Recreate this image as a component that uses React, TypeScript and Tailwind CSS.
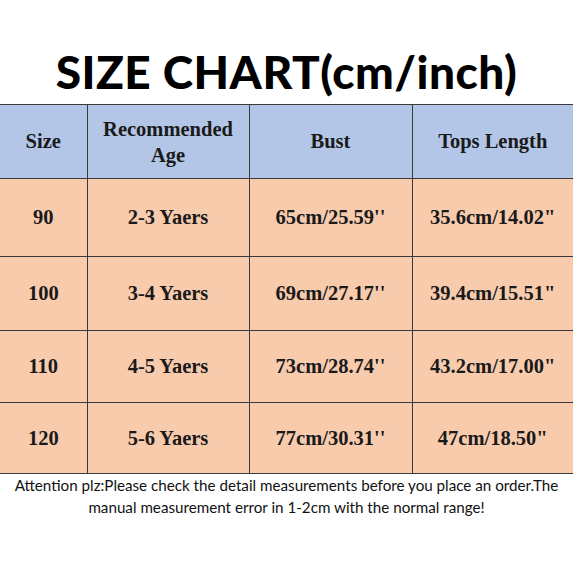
const rows = [
  ["90", "2-3 Yaers", "65cm/25.59''", '35.6cm/14.02"'],
  ["100", "3-4 Yaers", "69cm/27.17''", '39.4cm/15.51"'],
  ["110", "4-5 Yaers", "73cm/28.74''", '43.2cm/17.00"'],
  ["120", "5-6 Yaers", "77cm/30.31''", '47cm/18.50"'],
]

const rowHeights = ["h-[78px]", "h-[74px]", "h-[72px]", "h-[71px]"]

export default function App() {
  return (
    <div className="w-[573px] h-[573px] bg-white overflow-hidden">
      <div className="h-[104px] flex items-end justify-center pb-[2px]">
        <h1 className="text-[46px] leading-none font-black text-black tracking-[0.5px] pb-[7px] [font-family:Lato,'DejaVu_Sans',sans-serif]">
          SIZE CHART(cm/inch)
        </h1>
      </div>
      <table className="w-full border-collapse text-[20.5px] font-bold text-[#1a1a1a] [font-family:'Liberation_Serif',serif]">
        <colgroup>
          <col className="w-[87px]" />
          <col className="w-[162px]" />
          <col className="w-[163px]" />
          <col className="w-[161px]" />
        </colgroup>
        <thead>
          <tr className="h-[74px] bg-[#b4c6e7] border-t border-b border-[#3a3a3a]">
            <th className="border-r border-[#3a3a3a] font-bold">Size</th>
            <th className="border-r border-[#3a3a3a] font-bold leading-[26px]">
              Recommended
              <br />
              Age
            </th>
            <th className="border-r border-[#3a3a3a] font-bold">Bust</th>
            <th className="font-bold">Tops Length</th>
          </tr>
        </thead>
        <tbody>
          {rows.map((r, i) => (
            <tr key={r[0]} className={`${rowHeights[i]} bg-[#f8cbad] border-b border-[#3a3a3a]`}>
              <td className="text-center border-r border-[#3a3a3a]">{r[0]}</td>
              <td className="text-center border-r border-[#3a3a3a]">{r[1]}</td>
              <td className="text-center border-r border-[#3a3a3a]">{r[2]}</td>
              <td className="text-center">{r[3]}</td>
            </tr>
          ))}
        </tbody>
      </table>
      <p className="mt-0 text-center text-[15.2px] leading-[22px] text-[#111] [font-family:Lato,sans-serif]">
        Attention plz:Please check the detail measurements before you place an order.The
        <br />
        manual measurement error in 1-2cm with the normal range!
      </p>
    </div>
  )
}
